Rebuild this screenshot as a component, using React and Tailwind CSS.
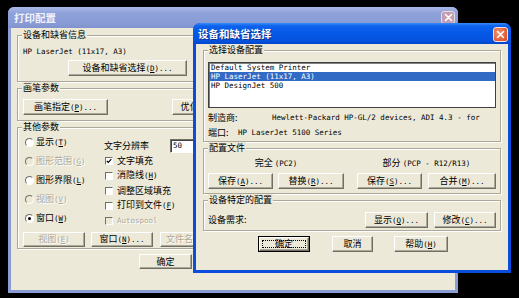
import React from 'react';

function M({ children, className = '' }) {
  return <span className={`font-['DejaVu_Sans_Mono',monospace] text-[7.5px] ${className}`}>{children}</span>;
}

function Btn({ className = '', disabled = false, children }) {
  return (
    <div
      className={`flex items-center justify-center bg-[#ece9d8] border border-t-white border-l-white border-r-[#716f64] border-b-[#716f64] shadow-[inset_-1px_-1px_0_#aca899] whitespace-nowrap overflow-hidden ${
        disabled ? 'text-[#aca899] [text-shadow:1px_1px_0_#fff]' : 'text-black'
      } ${className}`}
    >
      <span className="leading-[12px]">{children}</span>
    </div>
  );
}

function DefBtn({ className = '', children }) {
  return (
    <div className={`border border-black ${className}`}>
      <div className="w-full h-full flex p-[2px] border border-t-white border-l-white border-r-[#716f64] border-b-[#716f64] shadow-[inset_-1px_-1px_0_#aca899] bg-[#ece9d8]">
        <div className="flex-1 flex items-center justify-center border border-dotted border-black leading-[12px]">
          {children}
        </div>
      </div>
    </div>
  );
}

function Group({ label, className = '', children }) {
  return (
    <fieldset className={`border border-[#aca899] shadow-[inset_1px_1px_0_#fff,1px_1px_0_#fff] ${className}`}>
      <legend className="ml-[4px] px-[1px] leading-[12px] bg-[#ece9d8]">{label}</legend>
      {children}
    </fieldset>
  );
}

function Radio({ checked = false, disabled = false, children }) {
  return (
    <div className="h-[19px] flex items-center">
      <span
        className={`ml-[2px] w-[9px] h-[9px] rounded-full border border-t-[#716f64] border-l-[#716f64] border-b-white border-r-white flex items-center justify-center ${
          disabled ? 'bg-[#ece9d8]' : 'bg-white'
        }`}
      >
        {checked && <span className="w-[3px] h-[3px] rounded-full bg-black" />}
      </span>
      <span className={`ml-[2px] leading-[12px] ${disabled ? 'text-[#aca899] [text-shadow:1px_1px_0_#fff]' : ''}`}>
        {children}
      </span>
    </div>
  );
}

function Check({ checked = false, disabled = false, children }) {
  return (
    <div className="h-[15px] flex items-center">
      <span
        className={`ml-[1px] w-[8px] h-[8px] border border-t-[#716f64] border-l-[#716f64] border-b-white border-r-white flex items-center justify-center ${
          disabled ? 'bg-[#ece9d8]' : 'bg-white'
        }`}
      >
        {checked && (
          <svg width="6" height="6" viewBox="0 0 6 6">
            <path d="M0.8 3 L2.3 4.5 L5.3 1.2" fill="none" stroke="#000" strokeWidth="1.2" />
          </svg>
        )}
      </span>
      <span className={`ml-[4px] leading-[12px] ${disabled ? 'text-[#aca899] [text-shadow:1px_1px_0_#fff]' : ''}`}>
        {children}
      </span>
    </div>
  );
}

function CloseBtn({ inactive = false }) {
  return (
    <div
      className={`flex items-center justify-center rounded-[3px] border ${
        inactive
          ? 'w-[14px] h-[13px] border-[#e6dbe4] bg-[#c49db3]'
          : 'w-[15px] h-[15px] mt-[2px] border-[#f4e2dc] bg-[radial-gradient(circle_at_35%_35%,#f29170,#d9441c)]'
      }`}
    >
      <svg width="9" height="9" viewBox="0 0 9 9">
        <path d="M1.5 1.5L7.5 7.5M7.5 1.5L1.5 7.5" stroke="#fff" strokeWidth="1.6" strokeLinecap="round" />
      </svg>
    </div>
  );
}

function BackWindow() {
  return (
    <div className="absolute left-[8px] top-[7px] w-[450px] h-[286px] flex flex-col rounded-t-[6px] bg-[#8a9dd4]">
      <div className="h-[21px] shrink-0 flex items-center justify-between pl-[6px] pr-[3px] rounded-t-[6px] bg-[linear-gradient(to_bottom,#a9b9e8,#8ea1d9_30%,#899bd5_80%,#7f92cd)]">
        <span className="font-bold text-[10.5px] text-[#eef2fb]">打印配置</span>
        <CloseBtn inactive />
      </div>
      <div className="flex-1 flex px-[3px] pb-[3px]">
        <div className="flex-1 bg-[#ece9d8] px-[6px] flex flex-col">
          <Group className="mt-[1px]" label="设备和缺省信息">
            <div className="pl-[5px] pt-[4px] pb-[5px]">
              <div className="h-[12px] leading-[12px]">
                <M>HP LaserJet (11x17, A3)</M>
              </div>
              <Btn className="mt-[3px] ml-[45px] w-[119px] h-[16px]">
                设备和缺省选择<M>(<u>D</u>)...</M>
              </Btn>
            </div>
          </Group>

          <Group label="画笔参数">
            <div className="pl-[5px] pt-[5px] pb-[5px] flex">
              <Btn className="w-[85px] h-[16px]">
                画笔指定<M>(<u>P</u>)...</M>
              </Btn>
              <Btn className="ml-[64px] w-[62px] h-[16px]">
                优化<M>(<u>Z</u>)...</M>
              </Btn>
            </div>
          </Group>

          <Group label="其他参数">
            <div className="pl-[5px] pb-[1px]">
              <div className="flex">
                <div className="w-[81px] flex flex-col">
                  <Radio>显示<M>(<u>T</u>)</M></Radio>
                  <Radio disabled>图形范围<M>(<u>G</u>)</M></Radio>
                  <Radio>图形界限<M>(<u>L</u>)</M></Radio>
                  <Radio disabled>视图<M>(<u>V</u>)</M></Radio>
                  <Radio checked>窗口<M>(<u>W</u>)</M></Radio>
                </div>
                <div className="flex flex-col pt-[6px]">
                  <div className="h-[14px] flex items-center">
                    <span className="w-[66px] leading-[12px]">文字分辨率</span>
                    <div className="w-[60px] h-[14px] bg-white border border-t-[#716f64] border-l-[#716f64] border-b-white border-r-white shadow-[inset_1px_1px_0_#404040] pl-[2px] flex items-center">
                      <M>50</M>
                    </div>
                  </div>
                  <Check checked>文字填充</Check>
                  <Check>消隐线<M>(<u>H</u>)</M></Check>
                  <Check>调整区域填充</Check>
                  <Check>打印到文件<M>(<u>F</u>)</M></Check>
                  <Check disabled><M>Autospool</M></Check>
                </div>
              </div>
              <div className="mt-[4px] flex">
                <Btn disabled className="w-[62px] h-[15px]">
                  视图<M>(<u>E</u>)</M>
                </Btn>
                <Btn className="ml-[6px] w-[62px] h-[15px]">
                  窗口<M>(<u>N</u>)...</M>
                </Btn>
                <Btn disabled className="ml-[7px] w-[66px] h-[15px]">
                  文件名<M>(<u>M</u>)...</M>
                </Btn>
              </div>
            </div>
          </Group>

          <Btn className="mt-[5px] ml-[122px] w-[53px] h-[15px]">确定</Btn>
        </div>
      </div>
    </div>
  );
}

function FrontWindow() {
  return (
    <div className="absolute left-[193px] top-[23px] w-[318px] h-[250px] flex flex-col rounded-t-[7px] bg-[#0a4cdb]">
      <div className="h-[21px] shrink-0 flex items-center justify-between pl-[5px] pr-[3px] rounded-t-[7px] bg-[linear-gradient(to_bottom,#3b8bf8_0%,#0c62ec_14%,#0558e6_50%,#0552de_85%,#0446cc_100%)]">
        <span className="font-bold text-[10.5px] text-white [text-shadow:1px_1px_0_#0b2a8a]">设备和缺省选择</span>
        <CloseBtn />
      </div>
      <div className="flex-1 flex px-[3px] pb-[3px]">
        <div className="flex-1 bg-[#ece9d8] px-[7px] flex flex-col">
          <Group label="选择设备配置">
            <div className="px-[4px] pt-[6px] pb-[2px]">
              <div className="h-[46px] bg-white border border-[#404040] shadow-[inset_1px_1px_0_#808080]">
                <div className="h-[9px] flex items-center pl-[2px]">
                  <M>Default System Printer</M>
                </div>
                <div className="h-[9px] flex items-center pl-[2px] bg-[#316ac5] text-white">
                  <M>HP LaserJet (11x17, A3)</M>
                </div>
                <div className="h-[9px] flex items-center pl-[2px]">
                  <M>HP DesignJet 500</M>
                </div>
              </div>
              <div className="mt-[4px] h-[12px] flex items-center">
                <span className="w-[64px] leading-[12px]">制造商:</span>
                <M>Hewlett-Packard HP-GL/2 devices, ADI 4.3 - for</M>
              </div>
              <div className="mt-[3px] h-[12px] flex items-center">
                <span className="w-[30px] leading-[12px]">端口:</span>
                <M>HP LaserJet 5100 Series</M>
              </div>
            </div>
          </Group>

          <Group label="配置文件">
            <div className="px-[4px] pt-[3px] pb-[4px] flex">
              <div className="w-[136px] flex flex-col">
                <div className="h-[12px] leading-[12px] text-center">
                  完全 <M>(PC2)</M>
                </div>
                <div className="mt-[4px] flex justify-between">
                  <Btn className="w-[65px] h-[16px]">保存<M>(<u>A</u>)...</M></Btn>
                  <Btn className="w-[66px] h-[16px]">替换<M>(<u>R</u>)...</M></Btn>
                </div>
              </div>
              <div className="ml-[13px] w-[139px] flex flex-col">
                <div className="h-[12px] leading-[12px] text-center">
                  部分 <M>(PCP - R12/R13)</M>
                </div>
                <div className="mt-[4px] flex justify-between">
                  <Btn className="w-[65px] h-[16px]">保存<M>(<u>S</u>)...</M></Btn>
                  <Btn className="w-[68px] h-[16px]">合并<M>(<u>M</u>)...</M></Btn>
                </div>
              </div>
            </div>
          </Group>

          <Group label="设备特定的配置">
            <div className="px-[4px] pt-[6px] pb-[2px] flex items-center">
              <span className="flex-1 leading-[12px]">设备需求:</span>
              <Btn className="w-[63px] h-[16px]">显示<M>(<u>Q</u>)...</M></Btn>
              <Btn className="ml-[6px] w-[62px] h-[16px]">修改<M>(<u>C</u>)...</M></Btn>
            </div>
          </Group>

          <div className="mt-[5px] flex">
            <DefBtn className="ml-[55px] w-[52px] h-[16px]">确定</DefBtn>
            <Btn className="ml-[22px] w-[41px] h-[16px]">取消</Btn>
            <Btn className="ml-[21px] w-[54px] h-[16px]">
              帮助<M>(<u>H</u>)</M>
            </Btn>
          </div>
        </div>
      </div>
    </div>
  );
}

export default function App() {
  return (
    <div className="relative w-[519px] h-[298px] bg-black overflow-hidden font-['Noto_Sans_CJK_SC',sans-serif] text-[9px] leading-[12px] text-black">
      <BackWindow />
      <FrontWindow />
    </div>
  );
}
